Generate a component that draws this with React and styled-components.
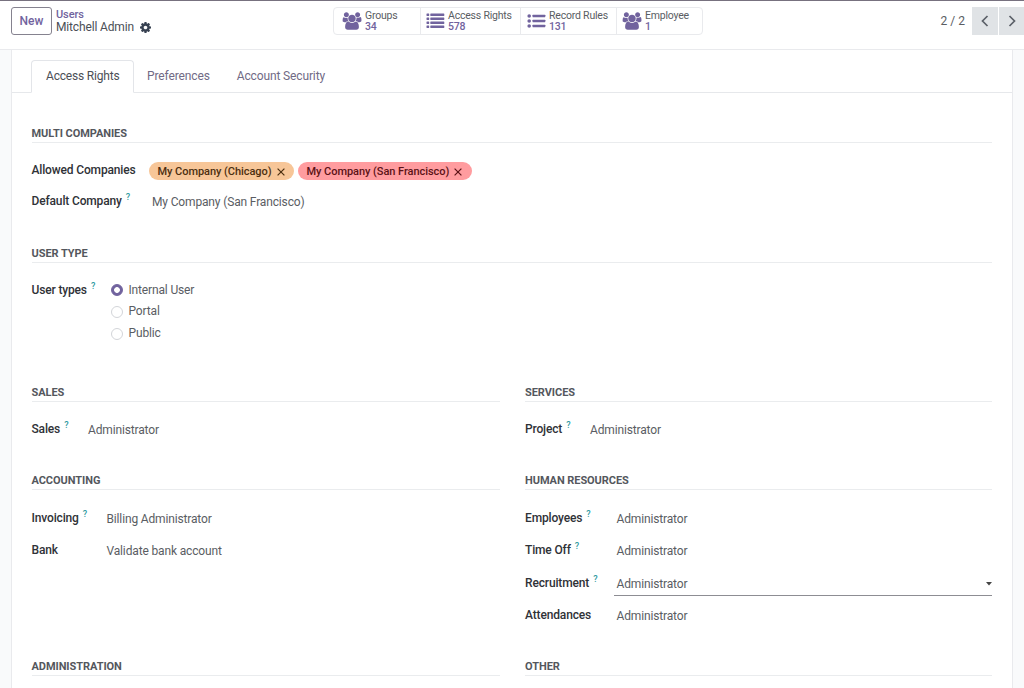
import styled, { createGlobalStyle } from "styled-components";

const App = () => {
  return (
    <Page>
      <GlobalStyle />
      <ControlPanel>
        <NewButton>New</NewButton>
        <Breadcrumb>
          <Parent>Users</Parent>
          <Current>
            Mitchell Admin
            <CogIcon />
          </Current>
        </Breadcrumb>
        <StatButtons>
          <Stat width={86} icon={<UsersIcon />} label="Groups" value="34" />
          <Stat width={100} pad={5} icon={<ListIcon />} label="Access Rights" value="578" />
          <Stat width={96} pad={6} icon={<BulletIcon />} label="Record Rules" value="131" />
          <Stat width={86} pad={5} icon={<UsersIcon />} label="Employee" value="1" />
        </StatButtons>
        <Pager>
          <Count>2 / 2</Count>
          <PagerButton><Chevron d="M6.5 1 1.5 6l5 5" /></PagerButton>
          <PagerButton><Chevron d="M1.5 1l5 5-5 5" /></PagerButton>
        </Pager>
      </ControlPanel>
      <Sheet>
        <Tabs>
          <Tab $active>Access Rights</Tab>
          <Tab>Preferences</Tab>
          <Tab>Account Security</Tab>
        </Tabs>
        <Groups>
          <Group title="Multi Companies" wide>
            <Row $height={31}>
              <Label $width={117.5}>Allowed Companies</Label>
              <Tags>
                <Tag $bg="#f7c698" $color="#4d2f10">My Company (Chicago)<CloseIcon /></Tag>
                <Tag $bg="#ff9c9f" $color="#5c1216">My Company (San Francisco)<CloseIcon /></Tag>
              </Tags>
            </Row>
            <Field height={31} width={117.5} label="Default Company" help value="My Company (San Francisco)" />
          </Group>
          <Group title="User Type" wide>
            <Row $height={31}>
              <Label $width={79.5}>User types<Help>?</Help></Label>
              <Radios>
                <Radio><Dot $checked />Internal User</Radio>
                <Radio><Dot />Portal</Radio>
                <Radio><Dot />Public</Radio>
              </Radios>
            </Row>
          </Group>
          <Group title="Sales">
            <Field width={53.5} label="Sales" help value="Administrator" />
          </Group>
          <Group title="Services">
            <Field width={62} label="Project" help value="Administrator" />
          </Group>
          <Group title="Accounting" gap={13}>
            <Field width={72} label="Invoicing" help value="Billing Administrator" />
            <Field width={72} label="Bank" value="Validate bank account" />
          </Group>
          <Group title="Human Resources" gap={13}>
            <Field width={88.5} label="Employees" help value="Administrator" />
            <Field width={88.5} label="Time Off" help value="Administrator" />
            <Field width={88.5} label="Recruitment" help value="Administrator" focused />
            <Field width={88.5} label="Attendances" value="Administrator" />
          </Group>
          <Group title="Administration" />
          <Group title="Other" />
        </Groups>
      </Sheet>
    </Page>
  );
};

export default App;

const Stat = ({ icon, label, value, width, pad = 8 }) => (
  <StatButton $width={width} $pad={pad}>
    {icon}
    <StatText>
      <span>{label}</span>
      <StatValue>{value}</StatValue>
    </StatText>
  </StatButton>
);

const Group = ({ title, wide, gap = 12, children }) => (
  <GroupBox $wide={wide}>
    <GroupTitle $gap={gap}>{title}</GroupTitle>
    {children}
  </GroupBox>
);

const Field = ({ label, help, value, width, height = 32.4, focused }) => (
  <Row $height={height}>
    <Label $width={width}>{label}{help && <Help>?</Help>}</Label>
    <Value $focused={focused}>
      {value}
      {focused && <Caret />}
    </Value>
  </Row>
);

// icons
const UsersIcon = () => (
  <svg width="20" height="18" viewBox="0 0 2048 1792" fill="currentColor">
    <path d="M657 896q-162 5-265 128h-134q-82 0-138-40.5t-56-118.5q0-353 124-353 6 0 43.5 21t97.5 42.5 119 21.5q67 0 133-23-5 37-5 66 0 159 93 286zm1071 637q0 120-73 189.5t-194 69.5h-874q-121 0-194-69.5t-73-189.5q0-53 3.5-103.5t14-109 26.5-108.5 43-97.5 62-81 85.5-53.5 111.5-20q10 0 43 21.5t73 48 107 48 135 21.5 135-21.5 107-48 73-48 43-21.5q61 0 111.5 20t85.5 53.5 62 81 43 97.5 26.5 108.5 14 109 3.5 103.5zm-1024-1277q0 106-75 181t-181 75-181-75-75-181 75-181 181-75 181 75 75 181zm704 384q0 159-112.5 271.5t-271.5 112.5-271.5-112.5-112.5-271.5 112.5-271.5 271.5-112.5 271.5 112.5 112.5 271.5zm576 225q0 78-56 118.5t-138 40.5h-134q-103-123-265-128 93-127 93-286 0-29-5-66 66 23 133 23 59 0 119-21.5t97.5-42.5 43.5-21q124 0 124 353zm-128-609q0 106-75 181t-181 75-181-75-75-181 75-181 181-75 181 75 75 181z" />
  </svg>
);

const ListIcon = () => (
  <svg width="19" height="16" viewBox="0 0 19 16" fill="currentColor">
    {[0.5, 4.5, 8.5, 12.5].map((y) => (
      <g key={y}>
        <rect x="0.5" y={y} width="2.7" height="2.5" rx="0.4" />
        <rect x="4.3" y={y} width="14" height="2.5" rx="0.4" />
      </g>
    ))}
  </svg>
);

const BulletIcon = () => (
  <svg width="19" height="16" viewBox="0 0 19 16" fill="currentColor">
    {[3, 8, 13].map((y) => (
      <g key={y}>
        <circle cx="2.2" cy={y} r="1.8" />
        <rect x="5.5" y={y - 1.2} width="12.8" height="2.4" rx="0.4" />
      </g>
    ))}
  </svg>
);

const CogIcon = () => (
  <svg width="11" height="11" viewBox="128 128 1536 1536" fill="#374151">
    <path d="M1152 896q0-106-75-181t-181-75-181 75-75 181 75 181 181 75 181-75 75-181zm512-109v222q0 12-8 23t-20 13l-185 28q-19 54-39 91 35 50 107 138 10 12 10 25t-9 23q-27 37-99 108t-94 71q-12 0-26-9l-138-108q-44 23-91 38-16 136-29 186-7 28-36 28h-222q-14 0-24.5-8.5t-11.5-21.5l-28-184q-49-16-90-37l-141 107q-10 9-25 9-14 0-25-11-126-114-165-168-7-10-7-23 0-12 8-23 15-21 51-66.5t54-70.5q-27-50-41-99l-183-27q-13-2-21-12.5t-8-23.5v-222q0-12 8-23t19-13l186-28q14-46 39-92-40-57-107-138-10-12-10-24 0-10 9-23 26-36 98.5-107.5t94.5-71.5q13 0 26 10l138 107q44-23 91-38 16-136 29-186 7-28 36-28h222q14 0 24.5 8.5t11.5 21.5l28 184q49 16 90 37l142-107q9-9 24-9 13 0 25 10 129 119 165 170 7 8 7 22 0 12-8 23-15 21-51 66.5t-54 70.5q26 50 41 98l183 28q13 2 21 12.5t8 23.5z" />
  </svg>
);

const Chevron = ({ d }) => (
  <svg width="8" height="12" viewBox="0 0 8 12" fill="none" stroke="#5b6068" strokeWidth="1.7">
    <path d={d} />
  </svg>
);

const CloseIcon = () => (
  <svg width="8" height="8" viewBox="0 0 8 8" fill="none" stroke="currentColor" strokeWidth="1.2">
    <path d="M.6.6l6.8 6.8M7.4.6L.6 7.4" />
  </svg>
);

const Caret = () => (
  <svg width="6" height="4" viewBox="0 0 6 4" fill="#444">
    <path d="M0 0h6L3 3.6z" />
  </svg>
);

const GlobalStyle = createGlobalStyle`
  * {
    box-sizing: border-box;
  }
  body {
    margin: 0;
    overflow: hidden;
    background: #f9fafb;
    font-family: Roboto, "Liberation Sans", sans-serif;
    font-size: 12px;
    letter-spacing: -0.15px;
    color: #5a5d63;
  }
`;

const Page = styled.div`
  display: flex;
  flex-direction: column;
  height: 688px;
  overflow: hidden;
`;

// top bar
const ControlPanel = styled.header`
  display: flex;
  align-items: flex-start;
  flex-shrink: 0;
  height: 50px;
  padding: 6px 0 0 11px;
  background: #fff;
  border-top: 1px solid #77717f;
  border-bottom: 1px solid #e9eaed;
`;

const NewButton = styled.button`
  width: 41px;
  height: 28px;
  padding: 0;
  background: #fff;
  border: 1px solid #85828f;
  border-radius: 3px;
  font: 500 12px Roboto, sans-serif;
  color: #71639e;
`;

const Breadcrumb = styled.div`
  display: flex;
  flex-direction: column;
  width: 281px;
  padding: 1px 0 0 4px;
  line-height: 13px;
`;

const Parent = styled.a`
  font-size: 11px;
  font-weight: 500;
  letter-spacing: -0.1px;
  color: #71639e;
`;

const Current = styled.div`
  display: flex;
  align-items: center;
  gap: 6px;
  color: #4b4f56;
`;

const StatButtons = styled.div`
  display: flex;
  height: 28px;
  border: 1px solid #e9eaed;
  border-radius: 4px;
`;

const StatButton = styled.div`
  display: flex;
  align-items: center;
  gap: 3px;
  width: ${({ $width }) => $width}px;
  padding-left: ${({ $pad }) => $pad}px;
  color: #71639e;
  & + & {
    border-left: 1px solid #e9eaed;
  }
`;

const StatText = styled.div`
  display: flex;
  flex-direction: column;
  font-size: 10.5px;
  line-height: 11.5px;
  letter-spacing: -0.2px;
  white-space: nowrap;
  color: #5a5d63;
`;

const StatValue = styled.span`
  font-weight: 500;
  color: #71639e;
`;

const Pager = styled.div`
  display: flex;
  align-items: center;
  gap: 1px;
  height: 28px;
  margin: 0 -1px 0 auto;
`;

const Count = styled.span`
  margin-right: 6px;
  letter-spacing: 0;
`;

const PagerButton = styled.div`
  display: flex;
  align-items: center;
  justify-content: center;
  width: 26px;
  height: 28px;
  background: #e0e3e6;
`;

// form sheet
const Sheet = styled.main`
  flex: 1;
  margin: 0 11px;
  background: #fff;
  border: solid #e9eaed;
  border-width: 0 1px;
`;

const Tabs = styled.nav`
  display: flex;
  height: 43px;
  padding: 10px 0 0 19px;
  border-bottom: 1px solid #e6e8eb;
`;

const Tab = styled.div`
  height: 33px;
  padding: 0 13.5px 0 14px;
  line-height: 31px;
  letter-spacing: -0.18px;
  border: 1px solid ${({ $active }) => ($active ? "#e3e5e9" : "transparent")};
  border-bottom-color: ${({ $active }) => ($active ? "#fff" : "transparent")};
  border-radius: 4px 4px 0 0;
  color: ${({ $active }) => ($active ? "#4b4f56" : "#716a85")};
  & + & {
    padding: 0 13px 0 12px;
    letter-spacing: -0.13px;
  }
`;

const Groups = styled.div`
  display: grid;
  grid-template-columns: 468.5px 467px;
  grid-template-rows: 120px 139px 88px 186px 20px;
  column-gap: 25px;
  padding: 30px 0 0 19.5px;
`;

const GroupBox = styled.section`
  grid-column: ${({ $wide }) => ($wide ? "1 / -1" : "auto")};
`;

const GroupTitle = styled.h2`
  height: 20px;
  margin: 0 0 ${({ $gap }) => $gap}px;
  border-bottom: 1px solid #eaecee;
  font-size: 11px;
  font-weight: 700;
  line-height: 21px;
  letter-spacing: -0.06px;
  text-transform: uppercase;
  color: #54575d;
`;

const Row = styled.div`
  display: flex;
  height: ${({ $height }) => $height}px;
  line-height: 31px;
`;

const Label = styled.div`
  flex-shrink: 0;
  width: ${({ $width }) => $width}px;
  font-weight: 500;
  white-space: nowrap;
  color: #2f3237;
`;

const Help = styled.sup`
  margin-left: 4px;
  font-size: 9px;
  line-height: 0;
  color: #2f9aa0;
`;

const Value = styled.div`
  display: flex;
  align-items: center;
  justify-content: space-between;
  flex: 1;
  height: 28px;
  padding: 6px 0 0 3px;
  border-bottom: 1px solid ${({ $focused }) => ($focused ? "#8d8d93" : "transparent")};
`;

const Tags = styled.div`
  display: flex;
  gap: 4px;
  padding-top: 7px;
`;

const Tag = styled.span`
  display: flex;
  align-items: center;
  gap: 5px;
  height: 18px;
  padding: 1px 9.5px 0 8.5px;
  background: ${({ $bg }) => $bg};
  border-radius: 9px;
  font-size: 11px;
  font-weight: 500;
  line-height: 18px;
  letter-spacing: -0.05px;
  color: ${({ $color }) => $color};
`;

const Radios = styled.div`
  display: flex;
  flex-direction: column;
  padding-top: 4.4px;
`;

const Radio = styled.div`
  display: flex;
  align-items: center;
  gap: 5.5px;
  height: 21.7px;
`;

const Dot = styled.span`
  width: 12px;
  height: 12px;
  background: ${({ $checked }) => ($checked ? "radial-gradient(circle, #fff 2.5px, #71639e 3.2px)" : "#fff")};
  border: 1px solid ${({ $checked }) => ($checked ? "#71639e" : "#d3d5d9")};
  border-radius: 50%;
`;
